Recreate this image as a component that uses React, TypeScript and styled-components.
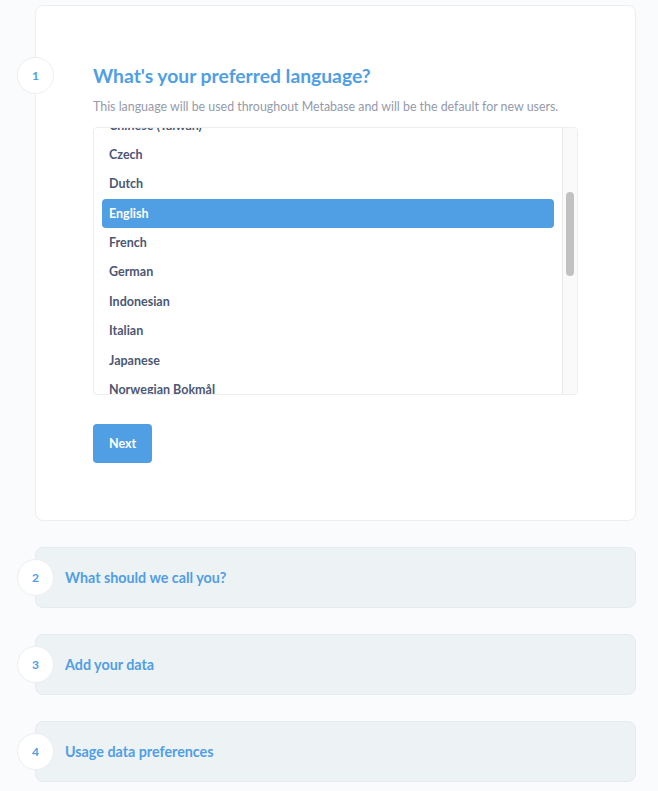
import React, { useLayoutEffect, useRef } from "react";
import styled, { createGlobalStyle } from "styled-components";

const GlobalStyle = createGlobalStyle`
  * {
    box-sizing: border-box;
  }

  body {
    margin: 0;
    background: #f9fbfc;
    font-family: Lato, "Noto Sans", sans-serif;
    -webkit-font-smoothing: antialiased;
  }
`;

const Page = styled.div`
  width: 658px;
  min-height: 791px;
  padding: 5px 0 0 35px;
  display: flex;
  flex-direction: column;
  gap: 26px;
`;

const Card = styled.section<{ $active?: boolean }>`
  width: 601px;
  border: 1px solid ${(p) => (p.$active ? "#eceff1" : "#e6ebee")};
  border-radius: 8px;
  background: ${(p) => (p.$active ? "#ffffff" : "#edf2f5")};
  padding: ${(p) => (p.$active ? "51px 57px 57px 57px" : "11px 0")};
`;

const StepHeader = styled.div<{ $active?: boolean }>`
  display: flex;
  align-items: center;
  gap: ${(p) => (p.$active ? "39px" : "11px")};
  margin-left: ${(p) => (p.$active ? "-76px" : "-19px")};
`;

const StepNumber = styled.span`
  flex: none;
  width: 37px;
  height: 37px;
  border-radius: 50%;
  border: 1px solid #eceff1;
  background: #ffffff;
  color: #509ee3;
  font-size: 12px;
  font-weight: 700;
  display: flex;
  align-items: center;
  justify-content: center;
`;

const Title = styled.h2`
  margin: 0;
  color: #509ee3;
  font-size: 19.3px;
  line-height: 24px;
  font-weight: 700;
`;

const StepTitle = styled.h3`
  margin: 0;
  color: #509ee3;
  font-size: 14.3px;
  line-height: 18px;
  font-weight: 700;
`;

const Paragraph = styled.p`
  margin: 5px 0 12px;
  color: #949aab;
  font-size: 12.4px;
  line-height: 16px;
  white-space: nowrap;
`;

const ListBox = styled.div`
  display: flex;
  height: 268px;
  border: 1px solid #eeeeee;
  border-radius: 4px;
  overflow: hidden;
`;

const LocaleList = styled.ul`
  flex: 1;
  list-style: none;
  margin: 0;
  padding: 8px;
  overflow: hidden;
`;

const ScrollTrack = styled.div`
  flex: none;
  width: 15px;
  padding: 0 3px 0 3px;
  background: #fafafa;
  border-left: 1px solid #e8e8e8;
`;

const ScrollThumb = styled.div`
  width: 8px;
  border-radius: 4px;
  background: #c1c1c1;
`;

const LocaleItem = styled.li<{ $selected?: boolean }>`
  height: 29.4px;
  display: flex;
  align-items: center;
  padding: 0 7px;
  border-radius: 4px;
  font-size: 12.5px;
  font-weight: 700;
  white-space: nowrap;
  color: ${(p) => (p.$selected ? "#ffffff" : "#4c5773")};
  background: ${(p) => (p.$selected ? "#509ee3" : "transparent")};
  cursor: pointer;
`;

const Button = styled.button`
  margin-top: 29px;
  height: 39px;
  padding: 0 16px;
  border: none;
  border-radius: 4px;
  background: #509ee3;
  color: #ffffff;
  font-family: inherit;
  font-size: 12.5px;
  font-weight: 700;
  cursor: pointer;
`;

const locales = [
  "Arabic",
  "Bulgarian",
  "Catalan",
  "Chinese",
  "Chinese (China)",
  "Chinese (Hong Kong)",
  "Chinese (Taiwan)",
  "Czech",
  "Dutch",
  "English",
  "French",
  "German",
  "Indonesian",
  "Italian",
  "Japanese",
  "Norwegian Bokmål",
  "Persian",
  "Polish",
  "Portuguese",
  "Russian",
  "Serbian",
  "Slovak",
  "Spanish",
  "Swedish",
  "Thai",
  "Turkish",
  "Ukrainian",
  "Vietnamese",
];

const steps = ["What should we call you?", "Add your data", "Usage data preferences"];

const ROW = 29.4;
const VIEW = 266;
const SCROLL_TOP = 8 + 7 * ROW - 11.5;

const App = () => {
  const listRef = useRef<HTMLUListElement>(null);
  const content = 16 + locales.length * ROW;
  const thumbHeight = (VIEW * VIEW) / content;
  const thumbTop = (SCROLL_TOP / (content - VIEW)) * (VIEW - thumbHeight);

  useLayoutEffect(() => {
    // keep "Czech" a bit under the top edge, as in the setup screen
    if (listRef.current) listRef.current.scrollTop = SCROLL_TOP;
  }, []);

  return (
    <>
      <GlobalStyle />
      <Page>
        <Card $active>
          <StepHeader $active>
            <StepNumber>1</StepNumber>
            <Title>What's your preferred language?</Title>
          </StepHeader>
          <Paragraph>
            This language will be used throughout Metabase and will be the default for new users.
          </Paragraph>
          <ListBox>
            <LocaleList ref={listRef}>
              {locales.map((locale) => (
                <LocaleItem key={locale} $selected={locale === "English"}>
                  {locale}
                </LocaleItem>
              ))}
            </LocaleList>
            <ScrollTrack>
              <ScrollThumb style={{ marginTop: thumbTop, height: thumbHeight }} />
            </ScrollTrack>
          </ListBox>
          <Button>Next</Button>
        </Card>
        {steps.map((step, index) => (
          <Card key={step}>
            <StepHeader>
              <StepNumber>{index + 2}</StepNumber>
              <StepTitle>{step}</StepTitle>
            </StepHeader>
          </Card>
        ))}
      </Page>
    </>
  );
};

export default App;
